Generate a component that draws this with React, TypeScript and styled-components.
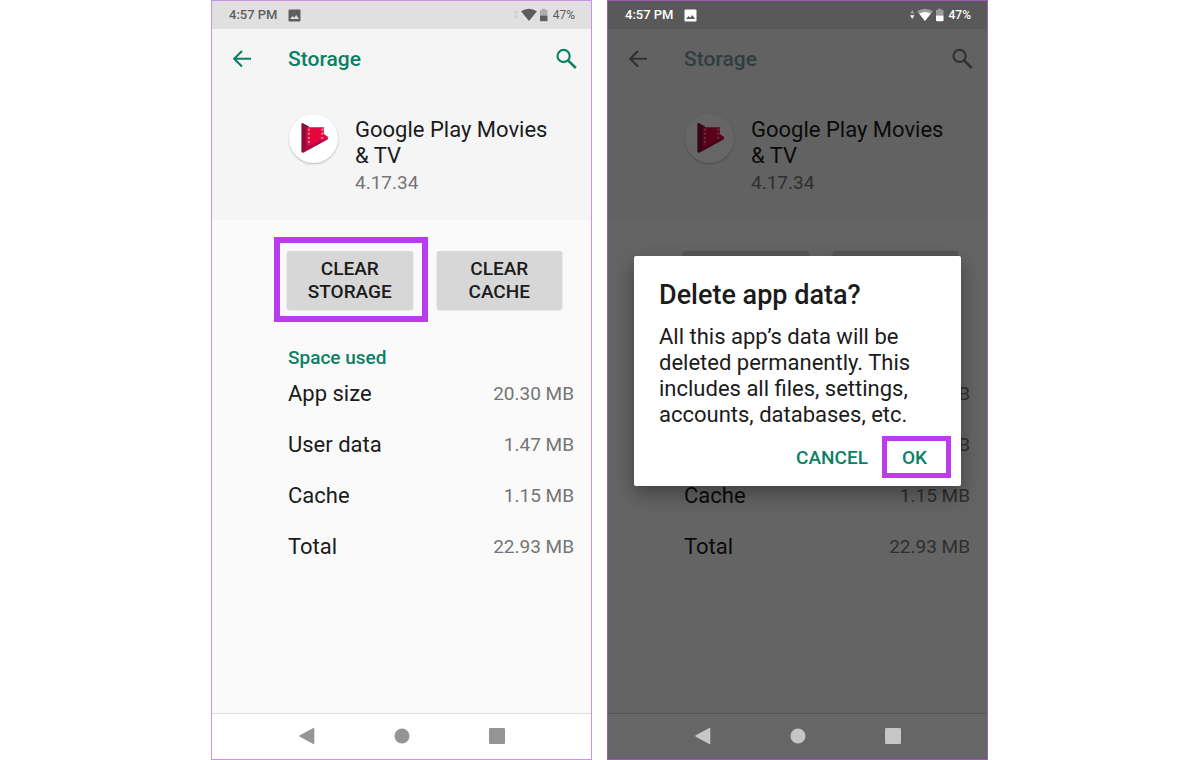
import React from "react";
import styled, { createGlobalStyle, css } from "styled-components";

const GlobalStyle = createGlobalStyle`
  *, *::before, *::after { box-sizing: border-box; }
  body { margin: 0; background: #ffffff; }
  button { font: inherit; border: 0; padding: 0; cursor: pointer; }
  h1, h2, p { margin: 0; }
`;

const purple = "#bb3cee";
const green = "#0b8065";

const Page = styled.main`
  display: grid;
  grid-template-columns: repeat(2, minmax(0, 381px));
  justify-content: center;
  column-gap: 15px;
  min-height: 100vh;
  padding-right: 1px;
  font-family: Roboto, "Liberation Sans", sans-serif;
  color: #1b1b1b;
`;

const Phone = styled.section<{ $dim?: boolean }>`
  display: flex;
  flex-direction: column;
  border: 1px solid ${(p) => (p.$dim ? "#9a5fb5" : "#c893e4")};
  background: ${(p) => (p.$dim ? "#666666" : "#ffffff")};
`;

const StatusBar = styled.header<{ $dim?: boolean }>`
  display: flex;
  align-items: center;
  height: 28px;
  padding: 0 16px 0 17px;
  background: ${(p) => (p.$dim ? "#595959" : "#e0e0e0")};
  color: ${(p) => (p.$dim ? "#ffffff" : "#5e5e5e")};
  font-size: 13px;
  font-weight: 500;
  line-height: 16px;
`;

const Clock = styled.time`
  margin-right: 10px;
`;

const StatusIcons = styled.div`
  display: flex;
  align-items: center;
  margin-left: auto;
`;

const Battery = styled.span<{ $dim?: boolean }>`
  margin-left: 5px;
  font-size: 12px;
  font-weight: ${(p) => (p.$dim ? 500 : 400)};
`;

const Screen = styled.div`
  position: relative;
  display: flex;
  flex: 1;
  flex-direction: column;
  background: #fafafa;
`;

const Top = styled.div`
  height: 191px;
  background: #f5f5f5;
`;

const TitleBar = styled.div<{ $dim?: boolean }>`
  display: flex;
  align-items: center;
  height: 60px;
  padding: 0 14px 0 20px;
  color: ${(p) => (p.$dim ? "#7b9c9e" : green)};
`;

const IconButton = styled.button<{ $dim?: boolean }>`
  display: flex;
  background: none;
  color: ${(p) => (p.$dim ? "#787878" : green)};
`;

const Title = styled.h1`
  flex: 1;
  margin-left: 36px;
  font-size: 21px;
  font-weight: 500;
  line-height: 26px;
`;

const AppInfo = styled.div`
  display: flex;
  gap: 17px;
  padding: 28px 30px 0 77px;
`;

const AppIcon = styled.div`
  flex: none;
  width: 49px;
  height: 49px;
  margin-top: -3px;
  border-radius: 50%;
  background: #ffffff;
  box-shadow: 0 1px 2px rgba(0, 0, 0, 0.25);
`;

const AppName = styled.h2`
  font-size: 22px;
  font-weight: 400;
  line-height: 26px;
`;

const Version = styled.p`
  font-size: 19px;
  line-height: 28px;
  color: #757575;
`;

const Actions = styled.div`
  display: flex;
  gap: 24px;
  padding: 31px 29px 0 75px;
`;

const ActionButton = styled.button<{ $marked?: boolean }>`
  position: relative;
  flex: 0 1 126px;
  height: 58px;
  padding: 0 16px;
  border-radius: 2px;
  background: #d7d7d7;
  box-shadow: 0 1px 2px rgba(0, 0, 0, 0.2);
  color: #1b1b1b;
  font-size: 19px;
  font-weight: 500;
  line-height: 23px;
  text-transform: uppercase;
  ${(p) =>
    p.$marked &&
    css`
      &::after {
        content: "";
        position: absolute;
        inset: -14px -15px -13px -13px;
        border: 6px solid ${purple};
      }
    `}
`;

const Usage = styled.section`
  padding: 39px 17px 0 76px;
`;

const UsageTitle = styled.h2`
  font-size: 19px;
  font-weight: 500;
  line-height: 20px;
  color: ${green};
`;

const UsageTable = styled.table`
  width: 100%;
  border-collapse: collapse;
  line-height: 26px;

  th, td { height: 51px; padding: 0; }
  th { font-size: 22px; font-weight: 400; text-align: left; }
  td { font-size: 19px; text-align: right; color: #757575; }
`;

const NavBar = styled.nav<{ $dim?: boolean }>`
  display: flex;
  justify-content: center;
  height: 46px;
  border-top: 1px solid ${(p) => (p.$dim ? "#555555" : "#dcdcdc")};
  color: ${(p) => (p.$dim ? "#c6c6c6" : "#959595")};
`;

const NavButton = styled.button`
  display: flex;
  align-items: center;
  justify-content: center;
  width: 95px;
  height: 44px;
  background: none;
  color: inherit;
`;

const Scrim = styled.div`
  position: absolute;
  inset: 0;
  display: flex;
  align-items: center;
  padding: 0 26px;
  background: rgba(0, 0, 0, 0.6);
`;

const Dialog = styled.div`
  width: 100%;
  padding: 24px 10px 8px 25px;
  border-radius: 2px;
  background: #ffffff;
  box-shadow: 0 8px 20px rgba(0, 0, 0, 0.35);
`;

const DialogTitle = styled.h2`
  font-size: 27px;
  font-weight: 500;
  line-height: 30px;
`;

const DialogText = styled.p`
  margin: 14px 24px 0 0;
  font-size: 22px;
  line-height: 26px;
`;

const DialogActions = styled.div`
  display: flex;
  align-items: center;
  justify-content: flex-end;
  gap: 14px;
  margin-top: 8px;
`;

const DialogButton = styled.button<{ $marked?: boolean }>`
  height: 42px;
  background: none;
  color: ${green};
  font-size: 19px;
  font-weight: 500;
  ${(p) =>
    p.$marked &&
    css`
      width: 69px;
      padding-right: 4px;
      border: 5px solid ${purple};
    `}
`;

const PictureIcon = () => (
  <svg width="13" height="13" viewBox="0 0 13 13" aria-hidden="true">
    <path
      fill="currentColor"
      fillRule="evenodd"
      d="M1.5 .5h10a1 1 0 0 1 1 1v10a1 1 0 0 1-1 1h-10a1 1 0 0 1-1-1v-10a1 1 0 0 1 1-1ZM2 10h9L8.2 6 6.2 8.7 4.6 7Z"
    />
  </svg>
);

const SignalIcons = ({ dim }: { dim?: boolean }) => (
  <svg width="34" height="14" viewBox="0 0 34 14" fill="currentColor" aria-hidden="true">
    <path d="M0 5.5 2.3 2l2.2 3.5Z" opacity={dim ? 0.4 : 0.12} />
    <path d="M0 7.2h4.5L2.3 11Z" opacity={dim ? 0.95 : 0.12} />
    <path d="M7 3.2Q15 -1.8 23 3.2L15 13Z" opacity={dim ? 0.4 : 1} />
    {dim && <path d="M9.2 5.6Q15 2.6 20.8 5.6L15 13Z" />}
    <path d="M26 2h2V.8h3.4V2h2.1v5.4H26Z" opacity=".4" />
    <path d="M26 7.4h7.5v5a.8.8 0 0 1-.8.8h-5.9a.8.8 0 0 1-.8-.8Z" />
  </svg>
);

const BackIcon = () => (
  <svg width="20" height="20" viewBox="0 0 20 20" fill="none" stroke="currentColor" strokeWidth="2.1" aria-hidden="true">
    <path d="M19 9.7H2.6M10 1.9 2.2 9.7l7.8 7.8" />
  </svg>
);

const SearchIcon = () => (
  <svg width="22" height="22" viewBox="0 0 22 22" fill="none" stroke="currentColor" aria-hidden="true">
    <circle cx="8.6" cy="8" r="6.1" strokeWidth="2.1" />
    <path d="m13 12.3 7.8 7.7" strokeWidth="2.5" />
  </svg>
);

const MoviesIcon = () => (
  <svg width="49" height="49" viewBox="0 0 49 49" aria-hidden="true">
    <path fill="#8c0d3c" d="M12.4 10.2q0-1.6 1.6-1l6 3.2v21.6l-6 4.2q-1.6 1-1.6-.8Z" />
    <path fill="#b00a42" d="m13.4 38.2 6-8.7 19.4-5.5q.8.8-.2 1.6L14.4 38.8Z" />
    <path fill="#e3073f" d="M17.4 13.3h17.4v6.6l4 2.9q.8.8-.3 1.4L17.4 32.4Z" />
    <path stroke="#ff9db0" strokeWidth="1.7" strokeDasharray="1.8 2.3" d="M19.9 14.7v15.5M33.2 14.7v10.5" />
  </svg>
);

const usage = [
  ["App size", "20.30 MB"],
  ["User data", "1.47 MB"],
  ["Cache", "1.15 MB"],
  ["Total", "22.93 MB"],
];

function StorageScreen({ dim, children }: { dim?: boolean; children?: React.ReactNode }) {
  return (
    <Phone $dim={dim}>
      <StatusBar $dim={dim}>
        <Clock>4:57 PM</Clock>
        <PictureIcon />
        <StatusIcons>
          <SignalIcons dim={dim} />
          <Battery $dim={dim}>47%</Battery>
        </StatusIcons>
      </StatusBar>
      <Screen>
        <Top>
          <TitleBar $dim={dim}>
            <IconButton $dim={dim} aria-label="Back"><BackIcon /></IconButton>
            <Title>Storage</Title>
            <IconButton $dim={dim} aria-label="Search"><SearchIcon /></IconButton>
          </TitleBar>
          <AppInfo>
            <AppIcon><MoviesIcon /></AppIcon>
            <div>
              <AppName>Google Play Movies &amp; TV</AppName>
              <Version>4.17.34</Version>
            </div>
          </AppInfo>
        </Top>
        <Actions>
          <ActionButton $marked={!dim}>Clear storage</ActionButton>
          <ActionButton>Clear cache</ActionButton>
        </Actions>
        <Usage>
          <UsageTitle>Space used</UsageTitle>
          <UsageTable>
            <tbody>
              {usage.map(([label, size]) => (
                <tr key={label}>
                  <th scope="row">{label}</th>
                  <td>{size}</td>
                </tr>
              ))}
            </tbody>
          </UsageTable>
        </Usage>
        {children}
      </Screen>
      <NavBar $dim={dim}>
        <NavButton aria-label="Back">
          <svg width="16" height="18" viewBox="0 0 16 18" fill="currentColor" aria-hidden="true">
            <path d="M14.3 1q1-.5 1 .5v15q0 1-1 .5L.8 9.7q-1-.7 0-1.4Z" />
          </svg>
        </NavButton>
        <NavButton aria-label="Home">
          <svg width="16" height="16" viewBox="0 0 16 16" fill="currentColor" aria-hidden="true">
            <circle cx="8" cy="8" r="7.5" />
          </svg>
        </NavButton>
        <NavButton aria-label="Recent apps">
          <svg width="16" height="16" viewBox="0 0 16 16" fill="currentColor" aria-hidden="true">
            <rect width="16" height="16" rx="1.2" />
          </svg>
        </NavButton>
      </NavBar>
    </Phone>
  );
}

export default function App() {
  return (
    <>
      <GlobalStyle />
      <Page>
        <StorageScreen />
        <StorageScreen dim>
          <Scrim>
            <Dialog role="dialog" aria-labelledby="delete-title">
              <DialogTitle id="delete-title">Delete app data?</DialogTitle>
              <DialogText>
                All this app’s data will be deleted permanently. This includes all files, settings, accounts,
                databases, etc.
              </DialogText>
              <DialogActions>
                <DialogButton>CANCEL</DialogButton>
                <DialogButton $marked>OK</DialogButton>
              </DialogActions>
            </Dialog>
          </Scrim>
        </StorageScreen>
      </Page>
    </>
  );
}
